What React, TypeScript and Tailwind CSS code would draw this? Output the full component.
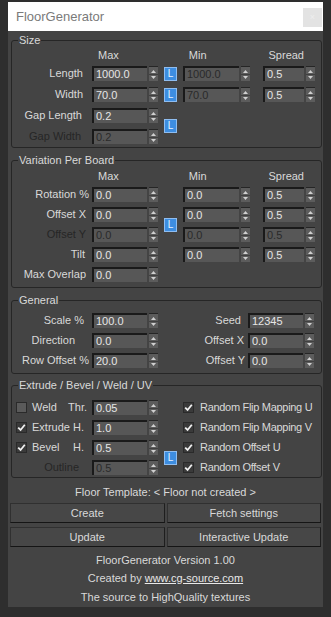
import React from "react";

const LBL = "text-[#d9d9d9]";
const DIS = "text-[#262626]";

function Arrows() {
  return (
    <div className="ml-[2px] w-[9px] h-[15px] bg-[#5c5c5c] border-t border-[#262626] flex">
      <svg width="9" height="14" viewBox="0 0 9 14">
        <polygon points="2,6 7,6 4.5,3" fill="#d0d0d0" />
        <line x1="0" y1="7.5" x2="9" y2="7.5" stroke="#404040" strokeWidth="1" />
        <polygon points="2,9 7,9 4.5,12" fill="#d0d0d0" />
      </svg>
    </div>
  );
}

function Spin({ v, w, dis }: { v: string; w: string; dis?: boolean }) {
  return (
    <div className="flex items-center h-[15px]">
      <div
        className={`${w} h-[15px] bg-[#575757] border-t-2 border-l-2 border-[#1a1a1a] pl-[2px] text-[11px] leading-[13px] whitespace-nowrap overflow-hidden ${
          dis ? "text-[#2a2a2a]" : "text-[#e6e6e6]"
        }`}
      >
        {v}
      </div>
      <Arrows />
    </div>
  );
}

function LBtn() {
  return (
    <div className="w-[13px] h-[14px] bg-[#3d8de0] border border-[#8fbdf0] flex items-center justify-center text-[10px] leading-[12px] text-[#e8f2ff]">
      L
    </div>
  );
}

function Check({ on }: { on: boolean }) {
  return (
    <div
      className={`w-[11px] h-[11px] shrink-0 border border-[#2a2a2a] flex items-center justify-center ${
        on ? "bg-[#3a3a3a]" : "bg-[#5a5a5a]"
      }`}
    >
      {on && (
        <svg width="9" height="9" viewBox="0 0 9 9">
          <path d="M1.2 4.6 L3.6 7 L7.8 1.8" stroke="#f0f0f0" strokeWidth="1.8" fill="none" />
        </svg>
      )}
    </div>
  );
}

function Group({ title, className, children }: { title: string; className?: string; children: React.ReactNode }) {
  return (
    <fieldset className={`ml-[3px] mr-[1px] border border-[#262626] rounded-[3px] ${className ?? ""}`}>
      <legend className={`ml-[6px] px-[1px] text-[11px] leading-[13px] ${LBL}`}>{title}</legend>
      {children}
    </fieldset>
  );
}

function Header({ className }: { className: string }) {
  return (
    <div className={`flex h-[14px] leading-[14px] text-[11px] ${LBL} ${className}`}>
      <span className="ml-[86px]">Max</span>
      <span className="ml-[70px]">Min</span>
      <span className="ml-[62px]">Spread</span>
    </div>
  );
}

function Label({ t, pr, dis }: { t: string; pr: string; dis?: boolean }) {
  return (
    <div className={`h-[15px] leading-[15px] text-right whitespace-nowrap ${pr} ${dis ? DIS : LBL}`}>{t}</div>
  );
}

function RCheck({ t }: { t: string }) {
  return (
    <div className={`flex items-center gap-[6px] tracking-[-0.3px] whitespace-nowrap ${LBL}`}>
      <Check on />
      <span>{t}</span>
    </div>
  );
}

export default function App() {
  return (
    <div
      className="w-[331px] h-[617px] bg-[#2e2e2e] pt-[2px] text-[11px]"
      style={{ fontFamily: "'Liberation Sans', Arial, sans-serif" }}
    >
      <div className="ml-[8px] w-[315px] h-[605px] bg-[#444444] flex flex-col">
        {/* title bar */}
        <div className="h-[29px] bg-white flex items-center justify-between pl-[8px] pr-[1px]">
          <span className="text-[13px] text-[#7a7a7a] leading-[16px]">FloorGenerator</span>
          <div className="mt-[2px] w-[19px] h-[19px] bg-[#e3e3e3] flex items-center justify-center text-[9px] text-[#eeeeee]">×</div>
        </div>

        {/* Size */}
        <Group title="Size" className="mt-[3px] pb-[3px]">
          <Header className="mt-[1px]" />
          <div className="mt-[4px] grid grid-cols-[80px_66px_25px_67px_65px] grid-rows-[15px_15px_15px_15px] gap-y-[6px] items-center">
            <Label t="Length" pr="pr-[9px]" />
            <Spin v="1000.0" w="w-[55px]" />
            <div className="flex justify-center"><LBtn /></div>
            <Spin v="1000.0" w="w-[56px]" dis />
            <div className="justify-self-end"><Spin v="0.5" w="w-[41px]" /></div>

            <Label t="Width" pr="pr-[9px]" />
            <Spin v="70.0" w="w-[55px]" />
            <div className="flex justify-center"><LBtn /></div>
            <Spin v="70.0" w="w-[56px]" dis />
            <div className="justify-self-end"><Spin v="0.5" w="w-[41px]" /></div>

            <Label t="Gap Length" pr="pr-[10px]" />
            <Spin v="0.2" w="w-[55px]" />
            <div className="row-span-2 flex justify-center"><LBtn /></div>
            <div />
            <div />

            <Label t="Gap Width" pr="pr-[11px]" dis />
            <Spin v="0.2" w="w-[55px]" dis />
            <div />
            <div />
          </div>
        </Group>

        {/* Variation */}
        <Group title="Variation Per Board" className="mt-[6px] pb-[5px]">
          <Header className="mt-[2px]" />
          <div className="mt-[4px] grid grid-cols-[80px_66px_25px_67px_65px] grid-rows-[15px_15px_15px_15px_15px] gap-y-[5px] items-center">
            <Label t="Rotation %" pr="pr-[3px]" />
            <Spin v="0.0" w="w-[55px]" />
            <div />
            <Spin v="0.0" w="w-[56px]" />
            <div className="justify-self-end"><Spin v="0.5" w="w-[41px]" /></div>

            <Label t="Offset X" pr="pr-[6px]" />
            <Spin v="0.0" w="w-[55px]" />
            <div className="row-span-2 flex justify-center"><LBtn /></div>
            <Spin v="0.0" w="w-[56px]" />
            <div className="justify-self-end"><Spin v="0.5" w="w-[41px]" /></div>

            <Label t="Offset Y" pr="pr-[6px]" dis />
            <Spin v="0.0" w="w-[55px]" dis />
            <Spin v="0.0" w="w-[56px]" dis />
            <div className="justify-self-end"><Spin v="0.5" w="w-[41px]" dis /></div>

            <Label t="Tilt" pr="pr-[7px]" />
            <Spin v="0.0" w="w-[55px]" />
            <div />
            <Spin v="0.0" w="w-[56px]" />
            <div className="justify-self-end"><Spin v="0.5" w="w-[41px]" /></div>

            <Label t="Max Overlap" pr="pr-[6px]" />
            <Spin v="0.0" w="w-[55px]" />
            <div />
            <div />
            <div />
          </div>
        </Group>

        {/* General */}
        <Group title="General" className="mt-[6px] pb-[5px]">
          <div className="mt-[6px] grid grid-cols-[80px_66px_90px_67px] grid-rows-[15px_15px_15px] gap-y-[5px] items-center">
            <Label t="Scale %" pr="pr-[8px]" />
            <Spin v="100.0" w="w-[55px]" />
            <Label t="Seed" pr="pr-[7px]" />
            <Spin v="12345" w="w-[55px]" />

            <Label t="Direction" pr="pr-[17px]" />
            <Spin v="0.0" w="w-[55px]" />
            <Label t="Offset X" pr="pr-[4px]" />
            <Spin v="0.0" w="w-[55px]" />

            <Label t="Row Offset %" pr="pr-[3px]" />
            <Spin v="20.0" w="w-[55px]" />
            <Label t="Offset Y" pr="pr-[3px]" />
            <Spin v="0.0" w="w-[55px]" />
          </div>
        </Group>

        {/* Extrude */}
        <Group title="Extrude / Bevel / Weld / UV" className="mt-[5px] pb-[2px]">
          <div className="mt-[8px] grid grid-cols-[80px_66px_25px_1fr] grid-rows-[15px_15px_15px_15px] gap-y-[5px] items-center">
            <div className={`flex items-center h-[15px] pl-[4px] pr-[5px] ${LBL}`}>
              <Check on={false} />
              <span className="ml-[5px]">Weld</span>
              <span className="ml-auto">Thr.</span>
            </div>
            <Spin v="0.05" w="w-[55px]" />
            <div />
            <RCheck t="Random Flip Mapping U" />

            <div className={`flex items-center h-[15px] pl-[4px] pr-[8px] ${LBL}`}>
              <Check on />
              <span className="ml-[5px]">Extrude</span>
              <span className="ml-auto">H.</span>
            </div>
            <Spin v="1.0" w="w-[55px]" />
            <div />
            <RCheck t="Random Flip Mapping V" />

            <div className={`flex items-center h-[15px] pl-[4px] pr-[8px] ${LBL}`}>
              <Check on />
              <span className="ml-[5px]">Bevel</span>
              <span className="ml-auto">H.</span>
            </div>
            <Spin v="0.5" w="w-[55px]" />
            <div className="row-span-2 flex justify-center"><LBtn /></div>
            <RCheck t="Random Offset U" />

            <Label t="Outline" pr="pr-[13px]" dis />
            <Spin v="0.5" w="w-[55px]" dis />
            <RCheck t="Random Offset V" />
          </div>
        </Group>

        <div className={`mt-[7px] h-[14px] leading-[14px] text-center ${LBL}`}>Floor Template: &lt; Floor not created &gt;</div>

        <div className="mx-[2px] mt-[4px] grid grid-cols-2 gap-x-[2px] gap-y-[4px]">
          {["Create", "Fetch settings", "Update", "Interactive Update"].map((t) => (
            <div
              key={t}
              className={`h-[20px] leading-[18px] text-center bg-[#474747] border border-[#303030] border-b-[#151515] border-r-[#1e1e1e] ${LBL}`}
            >
              {t}
            </div>
          ))}
        </div>

        <div className={`mt-[6px] h-[14px] leading-[14px] text-center ${LBL}`}>FloorGenerator Version 1.00</div>
        <div className={`mt-[4px] h-[14px] leading-[14px] text-center ${LBL}`}>
          Created by <span className="underline text-[#e8e8e8]">www.cg-source.com</span>
        </div>
        <div className={`mt-[5px] h-[14px] leading-[14px] text-center ${LBL}`}>The source to HighQuality textures</div>
      </div>
    </div>
  );
}
